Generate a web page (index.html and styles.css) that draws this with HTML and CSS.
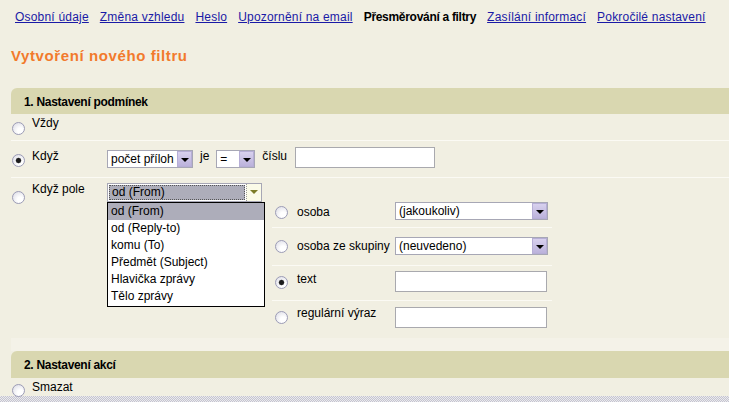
FILE: index.html
```html
<!DOCTYPE html>
<html lang="cs">
<head>
    <meta charset="UTF-8">
    <title>Přesměrování a filtry</title>
    <link rel="stylesheet" href="styles.css">
</head>
<body>
    <div class="tabs">
        <a href="#">Osobní údaje</a>
        <a href="#">Změna vzhledu</a>
        <a href="#">Heslo</a>
        <a href="#">Upozornění na email</a>
        <b>Přesměrování a filtry</b>
        <a href="#">Zasílání informací</a>
        <a href="#">Pokročilé nastavení</a>
    </div>

    <h1 class="title">Vytvoření nového filtru</h1>

    <div class="section">
        <div class="section-head">1. Nastavení podmínek</div>

        <div class="row row-always">
            <input type="radio" class="rb" name="cond">
            <label>Vždy</label>
        </div>

        <div class="row row-when">
            <input type="radio" class="rb" name="cond" checked>
            <label>Když</label>
            <div class="cell">
                <div class="sel sel-count"><span class="val">počet příloh</span><span class="btn"></span></div>
                <span class="word">je</span>
                <div class="sel sel-op"><span class="val">=</span><span class="btn"></span></div>
                <span class="word word-num">číslu</span>
                <input type="text" class="txt txt-num">
            </div>
        </div>

        <div class="row row-field">
            <input type="radio" class="rb" name="cond">
            <label>Když pole</label>
            <div class="cell">
                <div class="sel-wrap">
                    <div class="sel sel-field focus"><span class="val">od (From)</span><span class="btn"></span></div>
                    <ul class="list">
                        <li class="on">od (From)</li>
                        <li>od (Reply-to)</li>
                        <li>komu (To)</li>
                        <li>Předmět (Subject)</li>
                        <li>Hlavička zprávy</li>
                        <li>Tělo zprávy</li>
                    </ul>
                </div>

                <div class="sub">
                    <div class="sub-row sub-person">
                        <input type="radio" class="rb" name="who">
                        <label>osoba</label>
                        <div class="sel sel-wide"><span class="val">(jakoukoliv)</span><span class="btn"></span></div>
                    </div>
                    <div class="sub-row sub-group">
                        <input type="radio" class="rb" name="who">
                        <label>osoba ze skupiny</label>
                        <div class="sel sel-wide"><span class="val">(neuvedeno)</span><span class="btn"></span></div>
                    </div>
                    <div class="sub-row sub-text">
                        <input type="radio" class="rb" name="who" checked>
                        <label>text</label>
                        <input type="text" class="txt txt-wide">
                    </div>
                    <div class="sub-row sub-regex">
                        <input type="radio" class="rb" name="who">
                        <label>regulární výraz</label>
                        <input type="text" class="txt txt-wide">
                    </div>
                </div>
            </div>
        </div>
        <div class="section-end"></div>
    </div>

    <div class="section">
        <div class="section-head head-actions">2. Nastavení akcí</div>
        <div class="row row-action">
            <input type="radio" class="rb" name="act">
            <label>Smazat</label>
        </div>
    </div>

    <div class="frame-edge"></div>
</body>
</html>
```

FILE: styles.css
```css
body { margin: 0; background: #f1efe2; font-family: "Liberation Sans", Arial, sans-serif; font-size: 12px; color: #000; overflow: hidden; }

.tabs { display: flex; gap: 11px; padding: 10px 0 0 15px; line-height: 14px; white-space: nowrap; }
.tabs a { color: #1a1aa6; text-decoration: underline; letter-spacing: 0.2px; }
.tabs b { letter-spacing: -0.3px; }

.title { margin: 23px 0 0 11px; font-size: 15px; line-height: 18px; color: #f27a2c; font-weight: bold; letter-spacing: 0.6px; }

.section { margin-left: 11px; }
.section-head { margin-top: 23px; height: 23px; padding: 3px 0 0 13px; line-height: 23px; background: #d9d7b0; border-radius: 6px 0 0 0; font-weight: bold; letter-spacing: -0.3px; }
.head-actions { margin-top: 0; height: 24px; }
.section-end { height: 13px; background: #f4f2e8; }

label { font-weight: normal; line-height: 14px; white-space: nowrap; }

.row { display: grid; grid-template-columns: 21px 75px 1fr; align-items: start; border-bottom: 1px solid #fbfaf4; }
.row .rb { margin-left: 1px; }
.row-always { height: 26px; }
.row-always .rb { margin-top: 8px; }
.row-always label { margin-top: 2px; }
.row-when { height: 36px; }
.row-when .rb { margin-top: 13px; }
.row-when label { margin-top: 8px; }
.row-field { height: 160px; border-bottom: none; }
.row-field .rb { margin-top: 13px; }
.row-field label { margin-top: 4px; }
.row-action { height: 18px; border-bottom: none; }
.row-action .rb { margin-top: 6px; }
.row-action label { margin-top: 2px; }

.cell { display: flex; align-items: flex-start; }
.row-when .cell { margin-top: 6px; }
.row-field .cell { margin-top: 5px; }

.word { margin: 2px 7px 0; line-height: 14px; }
.word-num { margin-right: 8px; }

/* radio buttons */
.rb { appearance: none; -webkit-appearance: none; width: 13px; height: 13px; margin: 0; border: 1px solid #9c9cb6; border-radius: 50%; box-sizing: border-box; background: radial-gradient(circle at 65% 70%, #fff 25%, #d9d9e3 100%); }
.rb:checked { background: radial-gradient(circle, #1c1c1c 0 2px, #6a6a6a 2.6px, transparent 3.2px), radial-gradient(circle at 65% 70%, #fff 25%, #d9d9e3 100%); }

/* fake selects */
.sel { display: flex; box-sizing: border-box; height: 18px; border: 1px solid #a7a7b5; background: #fff; }
.sel .val { flex: 1; padding-left: 3px; line-height: 16px; overflow: hidden; white-space: nowrap; }
.sel .btn { position: relative; width: 15px; margin: 0 0 0 1px; box-sizing: border-box; border: 1px solid #b6aed6; background: linear-gradient(#d8d1ee, #bbb2db); }
.sel .btn::after { content: ""; position: absolute; left: 3px; top: 6px; border: 4px solid transparent; border-top: 4px solid #000; border-bottom: 0; }
.sel-count { width: 86px; margin-top: 3px; }
.sel-op { width: 39px; margin-top: 3px; }
.sel-field { width: 155px; height: 19px; }
.sel-wide { width: 153px; }

.sel.focus .val { margin: 1px 0 1px 1px; padding-left: 2px; line-height: 13px; border: 1px dotted #555; background: #adadba; }
.sel.focus .btn { border: none; border-left: 1px dotted #999; background: #fbfbe8; }
.sel.focus .btn::after { border-top-color: #7d7d27; }

.sel-wrap { position: relative; width: 155px; }
.list { position: absolute; left: 0; top: 19px; width: 158px; margin: 0; padding: 0 0 1px; list-style: none; box-sizing: border-box; border: 1px solid #000; background: #fff; z-index: 2; }
.list li { height: 17px; padding-left: 3px; line-height: 17px; white-space: nowrap; }
.list li.on { background: #adadba; }

/* text inputs */
.txt { box-sizing: border-box; margin: 0; padding: 0 3px; border: 1px solid #a9a9ae; background: #fff; font: inherit; }
.txt-num { width: 140px; height: 21px; }
.txt-wide { width: 152px; height: 21px; }

/* nested table */
.sub { margin: 13px 0 0 10px; width: 280px; }
.sub-row { display: grid; grid-template-columns: 25px 98px 1fr; align-items: start; border-bottom: 1px solid #fbfaf4; }
.sub-row .rb { margin-left: 3px; }
.sub-person { height: 31px; }
.sub-person .sel { margin-top: 6px; }
.sub-person .rb { margin-top: 10px; }
.sub-person label { margin-top: 9px; }
.sub-group { height: 37px; }
.sub-group .sel { margin-top: 9px; }
.sub-group .rb { margin-top: 12px; }
.sub-group label { margin-top: 11px; }
.sub-text { height: 34px; }
.sub-text .txt { margin-top: 5px; }
.sub-text .rb { margin-top: 10px; }
.sub-text label { margin-top: 6px; }
.sub-regex { height: 37px; border-bottom: none; }
.sub-regex .txt { margin-top: 6px; }
.sub-regex .rb { margin-top: 10px; }
.sub-regex label { margin-top: 5px; }

.frame-edge { height: 10px; background: repeating-conic-gradient(#c3c3d3 0 25%, #ecebea 0 50%) 0 0 / 2px 2px; }
```
